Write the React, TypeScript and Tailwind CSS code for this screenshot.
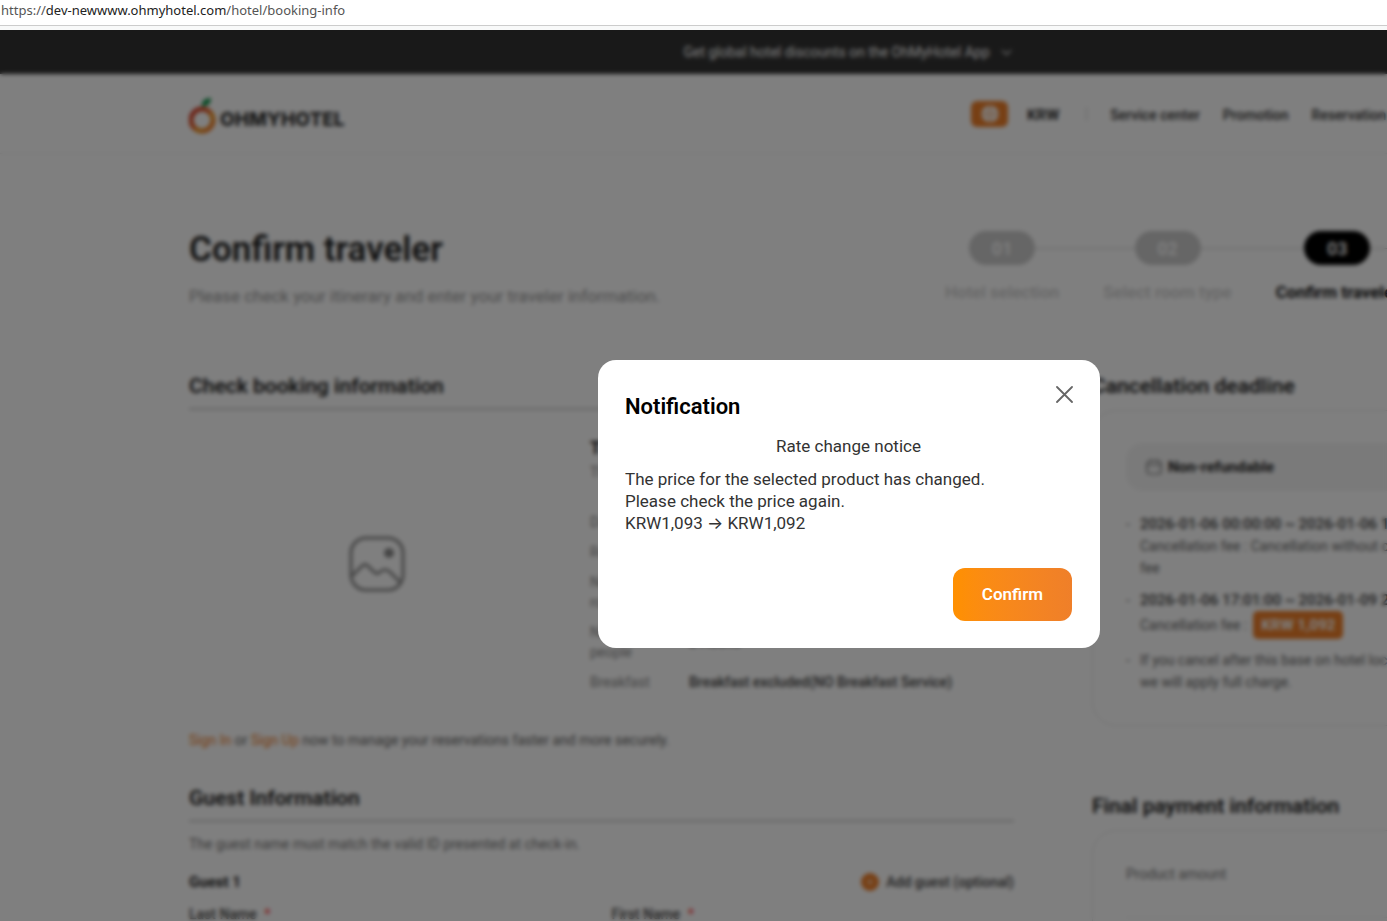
import { ChevronDown, Plus } from "lucide-react";
import type { ReactNode } from "react";

const steps = [
  { number: "01", label: "Hotel selection", active: false },
  { number: "02", label: "Select room type", active: false },
  { number: "03", label: "Confirm traveler", active: true },
];

const details = [
  { label: "Date", value: "2026-01-08" },
  { label: "Room type", value: "Standard" },
  { label: "Number of rooms", value: "1 Room" },
  { label: "Number of people", value: "2 Adults" },
  { label: "Breakfast", value: "Breakfast excluded(NO Breakfast Service)" },
];

function Logo() {
  return (
    <a href="#home" className="flex items-end gap-1 pt-1" aria-label="OHMYHOTEL">
      <svg width="27" height="37" viewBox="0 0 27 37" fill="none" aria-hidden="true">
        <defs>
          <linearGradient id="ring" x1="2" y1="12" x2="25" y2="34" gradientUnits="userSpaceOnUse">
            <stop offset="0" stopColor="#d0352b" />
            <stop offset="0.45" stopColor="#e8622a" />
            <stop offset="0.6" stopColor="#f39a20" />
            <stop offset="1" stopColor="#ee6a28" />
          </linearGradient>
        </defs>
        <circle cx="13" cy="23" r="11" stroke="url(#ring)" strokeWidth="5" />
        <path d="M13 10C12 4 16 1 22 1c0 6-4 8-9 9Z" fill="#12944a" />
      </svg>
      <span className="font-[Inter,sans-serif] text-[19px] leading-7 font-extrabold text-[#333]">OHMYHOTEL</span>
    </a>
  );
}

function GlobeIcon() {
  return (
    <svg width="18" height="18" viewBox="0 0 18 18" fill="none" stroke="#f3a466" aria-hidden="true">
      <circle cx="9" cy="9" r="8.5" fill="#fff" stroke="none" />
      <path d="M1 9h16M9 1v16M9 1c-5 4-5 12 0 16M9 1c5 4 5 12 0 16" />
    </svg>
  );
}

function ImagePlaceholder() {
  return (
    <svg width="56" height="56" viewBox="0 0 56 56" fill="none" stroke="#8a8a8a" strokeWidth="3" aria-hidden="true">
      <rect x="2" y="2" width="52" height="52" rx="15" />
      <circle cx="40" cy="17" r="3.5" fill="#8a8a8a" />
      <path d="M3 40l10-10c2-2 4-2 6 0l6 6c2 2 4 2 6 0 3-3 7-3 10 0l11 11" />
    </svg>
  );
}

function CalendarIcon() {
  return (
    <svg width="16" height="16" viewBox="0 0 16 16" fill="none" stroke="#666" strokeWidth="1.2" aria-hidden="true">
      <rect x="1" y="2" width="14" height="13" rx="3" />
      <path d="M1 6h14M5 0v3M11 0v3" />
    </svg>
  );
}

function SectionTitle({ children }: { children: ReactNode }) {
  return <h2 className="text-[21px] leading-8 font-semibold text-[#222]">{children}</h2>;
}

function Field({ id, label }: { id: string; label: string }) {
  return (
    <div>
      <label htmlFor={id} className="block text-[14px] leading-5 font-medium text-[#444]">
        {label} <span className="ml-1 text-[#f33]">*</span>
      </label>
      <input id={id} className="mt-2 h-12 w-full rounded-xl border border-[#ddd] px-4" />
    </div>
  );
}

function Site() {
  return (
    <div className="bg-white">
      <div className="flex h-11 items-center justify-center gap-2 bg-[#333] text-[14px] text-white">
        <span>Get global hotel discounts on the OhMyHotel App</span>
        <ChevronDown size={17} strokeWidth={1.5} />
      </div>
      <header className="border-b border-[#eee]">
        <div className="mx-auto flex h-[79px] w-[1320px] items-center justify-between">
          <Logo />
          <nav className="flex w-[538px] items-center text-[14px] leading-7 font-medium whitespace-nowrap text-[#333]">
            <button type="button" aria-label="Language" className="flex h-[26px] w-[37px] items-center justify-center rounded-md bg-[#ef7f29]">
              <GlobeIcon />
            </button>
            <button type="button" className="ml-[19px] pt-0.5 text-[15px] font-bold">KRW</button>
            <span className="ml-[27px] h-3.5 w-px bg-[#ccc]" />
            <a href="#service" className="ml-[23px] pt-0.5">Service center</a>
            <a href="#promotion" className="ml-[23px] pt-0.5">Promotion</a>
            <a href="#reservation" className="ml-[23px] pt-0.5">Reservation</a>
          </nav>
        </div>
      </header>

      <main className="mx-auto w-[1320px] pt-[70px]">
        <div className="flex justify-between">
          <div>
            <h1 className="text-[35px] leading-[52px] font-semibold text-[#222]">Confirm traveler</h1>
            <p className="mt-2 text-[17px] leading-6 text-[#999]">
              Please check your itinerary and enter your traveler information.
            </p>
          </div>
          <ol className="relative flex w-[564px] gap-11 pt-[7px]">
            <li aria-hidden="true" className="absolute top-6 right-0 left-14 h-px bg-[#ccc]" />
            {steps.map((step) => (
              <li key={step.number} className="relative flex flex-col items-center whitespace-nowrap">
                <span
                  className={
                    step.active
                      ? "flex h-[34px] w-[66px] items-center justify-center rounded-full bg-black text-[18px] font-semibold text-white"
                      : "flex h-[34px] w-[66px] items-center justify-center rounded-full bg-[#ccc] text-[18px] font-semibold text-white"
                  }
                >
                  {step.number}
                </span>
                <span
                  className={
                    step.active
                      ? "mt-[15px] text-[17px] leading-6 font-semibold text-black"
                      : "mt-[15px] text-[17px] leading-6 font-medium text-[#ccc]"
                  }
                >
                  {step.label}
                </span>
              </li>
            ))}
          </ol>
        </div>

        <div className="mt-[62px] flex justify-between">
          <div className="w-[825px]">
            <section>
              <div className="border-b-2 border-[#ccc] pb-1.5">
                <SectionTitle>Check booking information</SectionTitle>
              </div>
              <div className="flex gap-[26px] pt-[26px]">
                <div className="flex w-[375px] items-center justify-center">
                  <ImagePlaceholder />
                </div>
                <div className="flex-1">
                  <h3 className="text-[18px] leading-6 font-bold text-[#222]">The Hotel</h3>
                  <p className="text-[14px] leading-6 text-[#888]">The Hotel</p>
                  <dl className="mt-7 flex flex-col gap-2.5 text-[14px] leading-5">
                    {details.map((row) => (
                      <div key={row.label} className="flex items-center gap-5">
                        <dt className="w-[79px] text-[#888]">{row.label}</dt>
                        <dd className="font-medium text-[#444]">{row.value}</dd>
                      </div>
                    ))}
                  </dl>
                </div>
              </div>
            </section>

            <p className="mt-[38px] text-[14px] leading-5 text-[#666]">
              <a href="#sign-in" className="text-[#ef7f29]">Sign In</a> or{" "}
              <a href="#sign-up" className="text-[#ef7f29]">Sign Up</a> now to manage your reservations faster and more
              securely.
            </p>

            <section className="mt-8">
              <div className="border-b-2 border-[#ccc] pb-1.5">
                <SectionTitle>Guest Information</SectionTitle>
              </div>
              <p className="mt-3 text-[14px] leading-5 text-[#777]">
                The guest name must match the valid ID presented at check-in.
              </p>
              <div className="mt-[18px] flex items-center justify-between leading-5">
                <h3 className="text-[15px] font-bold text-[#222]">Guest 1</h3>
                <button type="button" className="flex items-center gap-[7px] text-[14px] font-medium text-[#444]">
                  <span className="flex size-[18px] items-center justify-center rounded-full bg-[#ef7f29]">
                    <Plus size={10} color="#fff" />
                  </span>
                  Add guest (optional)
                </button>
              </div>
              <div className="mt-3 grid grid-cols-2 gap-5">
                <Field id="last-name" label="Last Name" />
                <Field id="first-name" label="First Name" />
              </div>
            </section>
          </div>

          <aside className="w-[417px]">
            <SectionTitle>Cancellation deadline</SectionTitle>
            <div className="mt-2 rounded-3xl border border-[#e5e5e5] px-[33px] py-8">
              <div className="flex h-12 items-center gap-1.5 rounded-2xl bg-[#f5f5f5] px-5 text-[15px] font-bold text-[#222]">
                <CalendarIcon />
                Non-refundable
              </div>
              <ul className="mt-[22px] flex flex-col gap-2.5 text-[14px] leading-[22px] text-[#666]">
                <li className="flex">
                  <span className="w-3.5 shrink-0">-</span>
                  <div>
                    <p className="text-[15px] font-medium whitespace-nowrap text-[#444]">2026-01-06 00:00:00 ~ 2026-01-06 17:00:00</p>
                    <p>Cancellation fee : Cancellation without cancellation fee</p>
                  </div>
                </li>
                <li className="flex">
                  <span className="w-3.5 shrink-0">-</span>
                  <div>
                    <p className="text-[15px] font-medium whitespace-nowrap text-[#444]">2026-01-06 17:01:00 ~ 2026-01-09 23:59:59</p>
                    <p className="flex h-7 items-center gap-1.5">
                      Cancellation fee :
                      <strong className="rounded-[5px] bg-[#ef7f29] px-2 text-[15px] leading-7 text-white">KRW 1,092</strong>
                    </p>
                  </div>
                </li>
                <li className="flex">
                  <span className="w-3.5 shrink-0">-</span>
                  <p>
                    If you cancel after this base on hotel local time,
                    <br />
                    we will apply full charge.
                  </p>
                </li>
              </ul>
            </div>

            <section className="mt-16">
              <SectionTitle>Final payment information</SectionTitle>
              <div className="mt-2 rounded-3xl border border-[#e5e5e5] px-[33px] py-8">
                <p className="border-b border-[#eee] pb-8 text-[14px] leading-[22px] text-[#777]">Product amount</p>
              </div>
            </section>
          </aside>
        </div>
      </main>
    </div>
  );
}

function NotificationDialog() {
  return (
    <div
      role="dialog"
      aria-modal="true"
      aria-labelledby="dialog-title"
      className="relative w-[502px] rounded-[18px] bg-white pt-8 pr-7 pb-[27px] pl-[27px] text-[17px] leading-[22px] text-[#333]"
    >
      <button type="button" aria-label="Close" className="absolute top-[26px] right-[27px]">
        <svg width="17" height="17" viewBox="0 0 17 17" stroke="#666" strokeWidth="1.8" strokeLinecap="round" aria-hidden="true">
          <path d="M1 1l15 15M16 1L1 16" />
        </svg>
      </button>
      <h2 id="dialog-title" className="text-[22px] leading-[30px] font-semibold text-black">Notification</h2>
      <p className="mt-[13px] text-center">Rate change notice</p>
      <p className="mt-[11px]">
        The price for the selected product has changed.
        <br />
        Please check the price again.
        <br />
        KRW1,093 → KRW1,092
      </p>
      <div className="mt-[34px] flex justify-end">
        <button
          type="button"
          className="h-[53px] w-[119px] rounded-xl bg-linear-to-r from-[#ff9000] to-[#ef7f29] pb-0.5 font-semibold text-white"
        >
          Confirm
        </button>
      </div>
    </div>
  );
}

export default function App() {
  return (
    <div className="h-screen overflow-hidden font-[Roboto,Inter,sans-serif]">
      <div className="h-[30px] bg-[#f8f9f9]">
        <div className="h-[26px] border-b border-[#ccc] bg-white pl-px font-['Noto_Sans',sans-serif] text-[13px] leading-5 text-[#555]">
          https://<span className="text-[#222]">dev-newwww.ohmyhotel.com</span>/hotel/booking-info
        </div>
      </div>
      <div className="relative min-w-[1698px] overflow-hidden">
        <Site />
        <div className="absolute inset-0 flex items-start justify-center bg-black/50 pt-[330px] backdrop-blur-[2px]">
          <NotificationDialog />
        </div>
      </div>
    </div>
  );
}
